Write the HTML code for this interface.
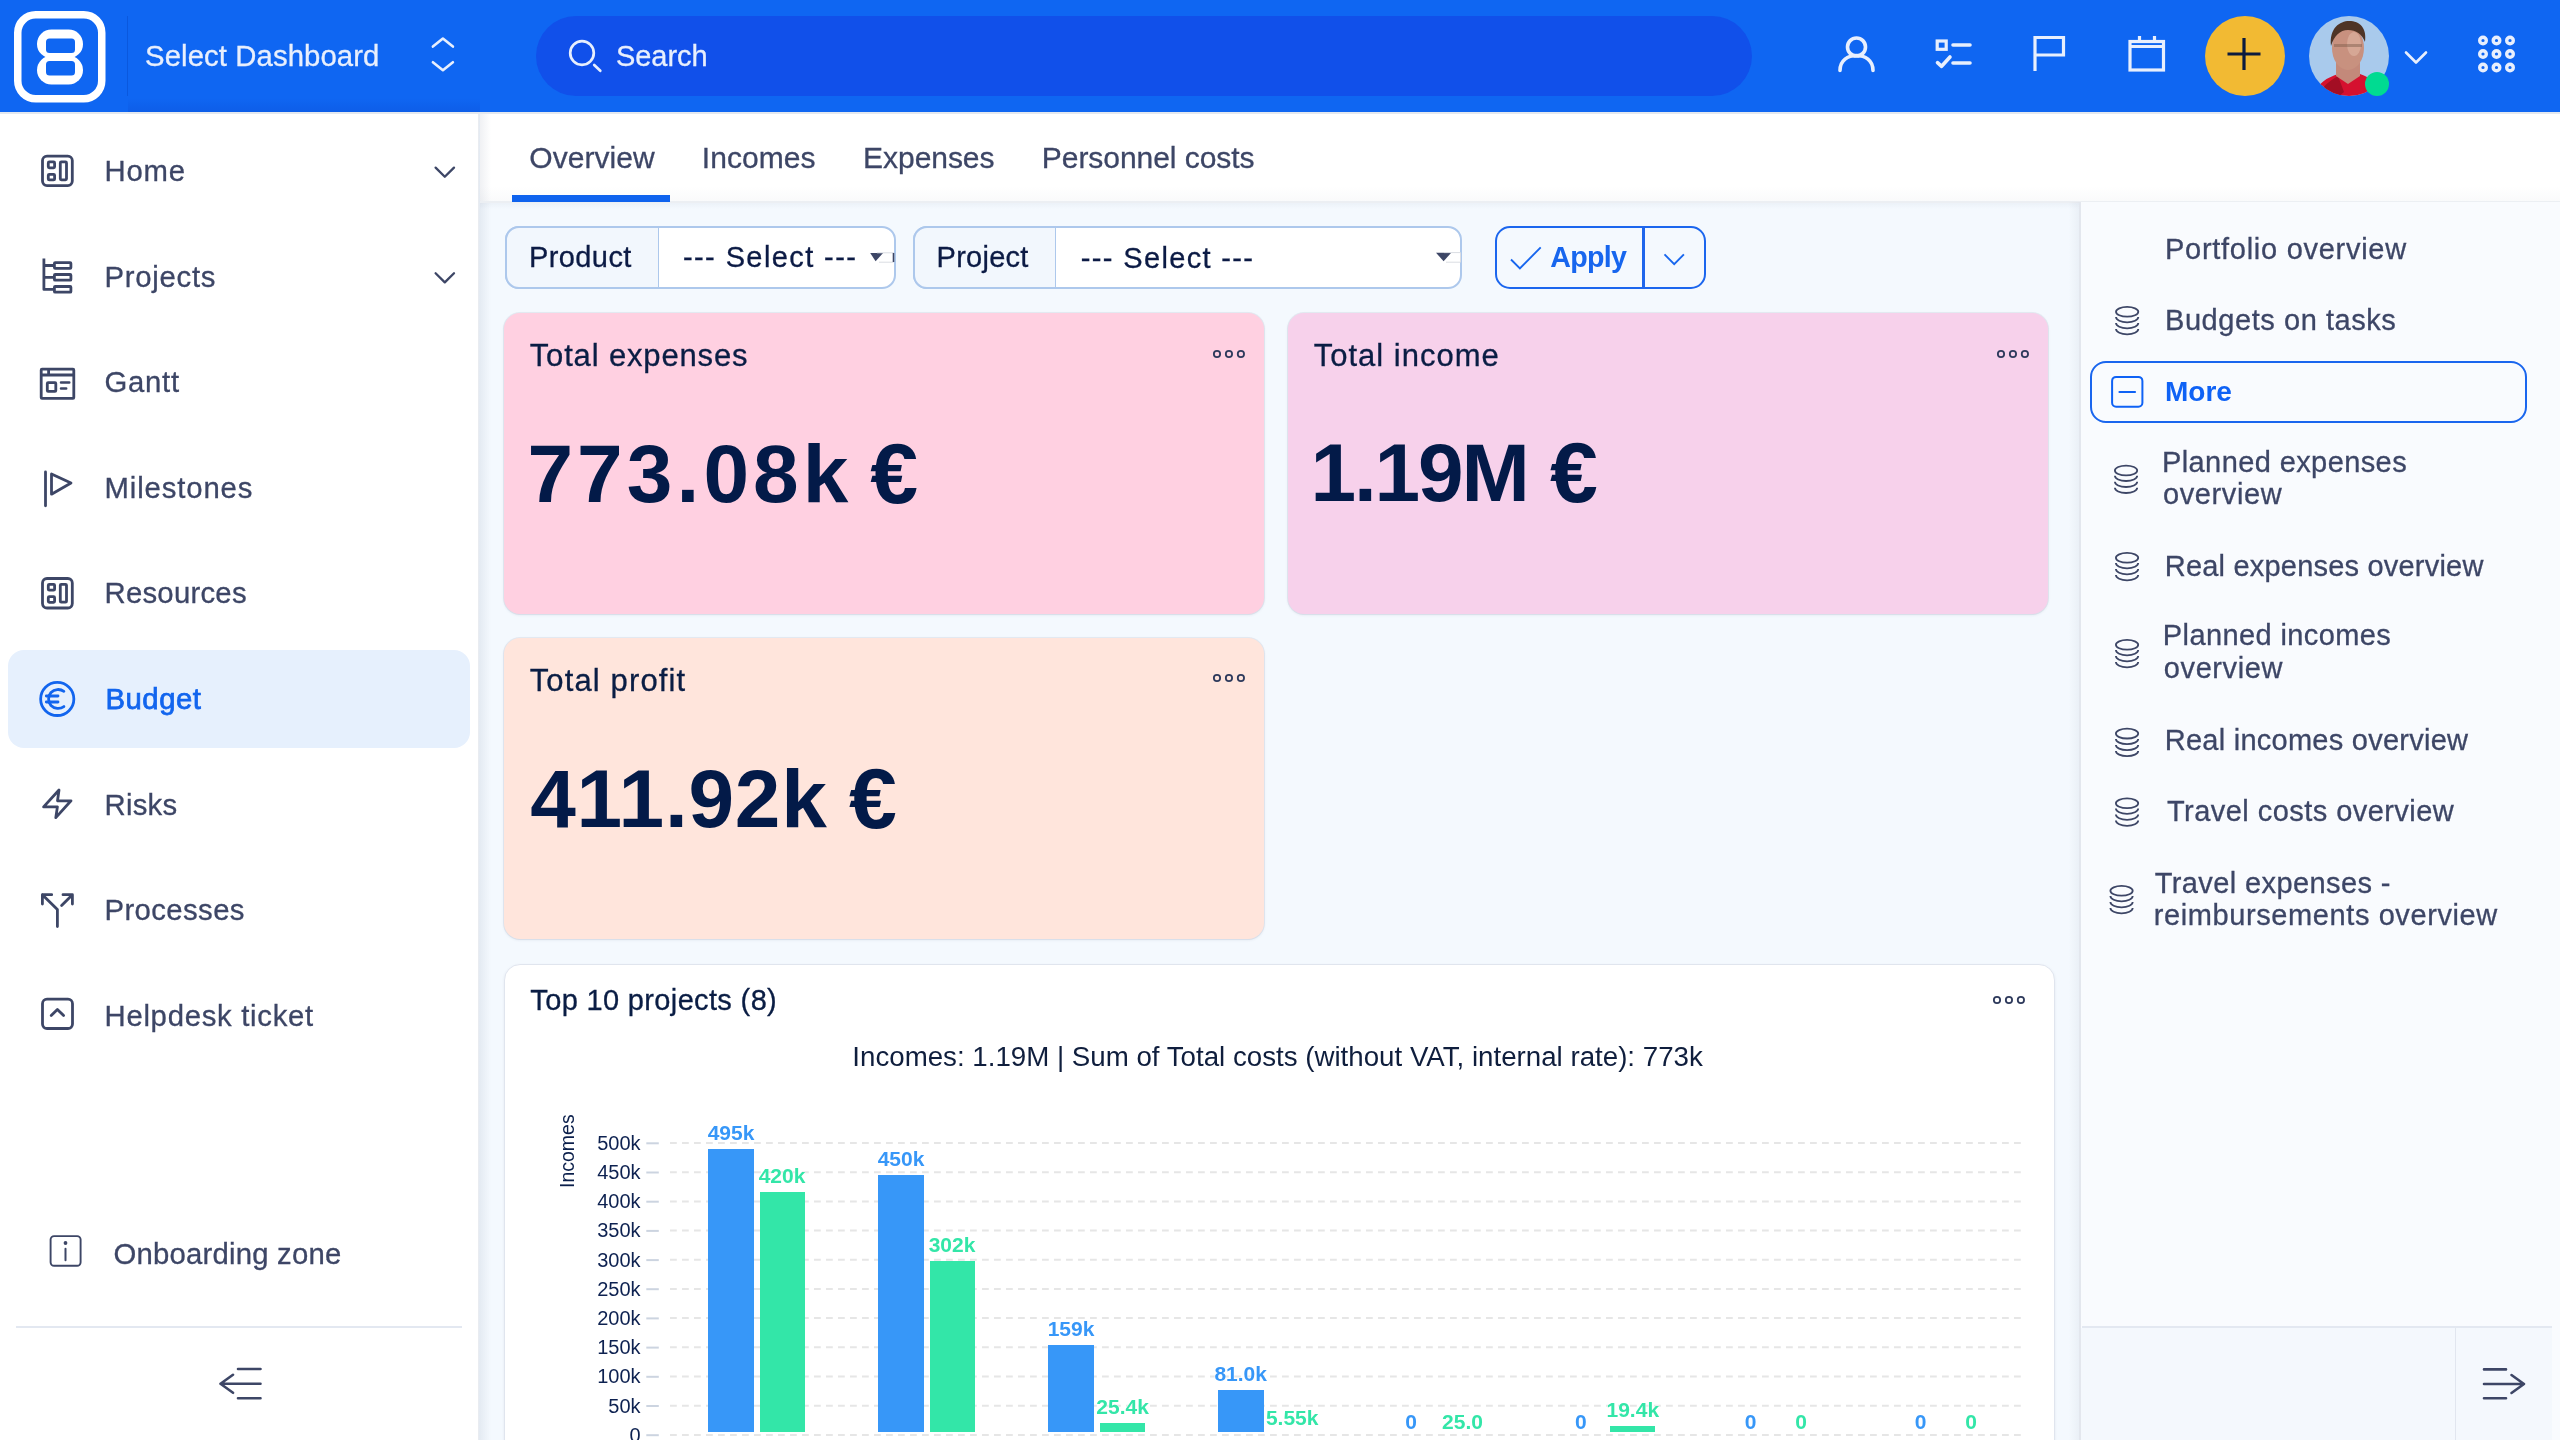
<!DOCTYPE html><html><head><meta charset="utf-8"><title>Budget</title><style>
*{margin:0;padding:0;box-sizing:border-box}
html,body{width:2560px;height:1440px;overflow:hidden;background:#F4F9FE;font-family:"Liberation Sans", sans-serif}
.a{position:absolute}
.t{position:absolute;line-height:1;white-space:nowrap}
svg{position:absolute;left:0;top:0;overflow:visible}
</style></head><body><div style="position:absolute;left:0;top:0;width:2560px;height:1440px;overflow:hidden;will-change:transform">
<div class="a" style="left:0px;top:112px;width:478px;height:1328px;background:#FFFFFF;border-radius:0px;"></div>
<div class="a" style="left:478px;top:112px;width:1px;height:1328px;background:#E9ECF1;border-radius:0px;"></div>
<div class="a" style="left:480px;top:112px;width:2080px;height:90px;background:#FFFFFF;border-radius:0px;"></div>
<div class="a" style="left:479px;top:112px;width:12px;height:1328px;background:linear-gradient(90deg,rgba(20,40,80,0.07),rgba(20,40,80,0));border-radius:0px;"></div>
<div class="a" style="left:480px;top:186px;width:2080px;height:15px;background:linear-gradient(180deg,rgba(20,40,80,0),rgba(20,40,80,0.025));border-radius:0px;"></div>
<div class="a" style="left:480px;top:201px;width:2080px;height:1.5px;background:#ECEFF3;border-radius:0px;"></div>
<div class="a" style="left:480px;top:202.5px;width:1600px;height:6px;background:linear-gradient(180deg,rgba(20,40,80,0.035),rgba(20,40,80,0));border-radius:0px;"></div>
<div class="a" style="left:2080px;top:202px;width:480px;height:1238px;background:#F9FBFE;border-radius:0px;"></div>
<div class="a" style="left:2079px;top:202px;width:2px;height:1238px;background:#E3E7EE;border-radius:0px;"></div>
<div class="a" style="left:2068px;top:202px;width:11px;height:1238px;background:linear-gradient(90deg,rgba(20,40,80,0),rgba(20,40,80,0.04));border-radius:0px;"></div>
<div class="a" style="left:2082px;top:1326px;width:470px;height:2px;background:#E3E8F1;border-radius:0px;"></div>
<div class="a" style="left:2081px;top:1328px;width:471px;height:112px;background:#F4F8FD;border-radius:0px;"></div>
<div class="a" style="left:2455px;top:1328px;width:1px;height:112px;background:#E1E6EF;border-radius:0px;"></div>
<div class="a" style="left:0px;top:0px;width:2560px;height:112px;background:#0F66F2;border-radius:0px;"></div>
<div class="a" style="left:128px;top:98px;width:352px;height:14px;background:linear-gradient(180deg,rgba(0,30,160,0),rgba(0,30,160,0.12));border-radius:0px;"></div>
<div class="a" style="left:0px;top:112px;width:2560px;height:2px;background:#E3E8EF;border-radius:0px;"></div>
<div class="a" style="left:127px;top:16px;width:1px;height:80px;background:#0A58DE;border-radius:0px;"></div>
<svg width="2560" height="112" style="left:0;top:0">
<rect x="17.75" y="14.75" width="84" height="84" rx="18" fill="none" stroke="#fff" stroke-width="7.5"/>
<rect x="37" y="29.5" width="46" height="28.8" rx="14.4" fill="#fff"/>
<rect x="37" y="55.7" width="46" height="28.8" rx="14.4" fill="#fff"/>
<rect x="46" y="38.5" width="29" height="14.5" rx="3.5" fill="#0F66F2"/>
<rect x="46" y="61" width="29" height="14.5" rx="3.5" fill="#0F66F2"/>
<path d="M432.9 46.6 L442.9 38.5 L452.9 46.6 M432.9 62.2 L442.9 70.2 L452.9 62.2" fill="none" stroke="#E8EFFD" stroke-width="2.6" stroke-linecap="round" stroke-linejoin="round"/>
<rect x="536" y="16" width="1216" height="80" rx="40" fill="#1150EA"/>
<circle cx="582" cy="53" r="11.8" fill="none" stroke="#E8EFFD" stroke-width="2.7"/>
<path d="M594.2 65 L600.3 70.8" stroke="#E8EFFD" stroke-width="2.7" stroke-linecap="round"/>
<g fill="none" stroke="#E8EFFD" stroke-width="3.6" stroke-linecap="round" stroke-linejoin="round">
<circle cx="1856.5" cy="47" r="9"/>
<path d="M1840 70.5 C1840 60 1848 55.5 1856.5 55.5 C1865 55.5 1873 60 1873 70.5"/>
<rect x="1937.2" y="41" width="9" height="8.3" stroke-width="3.2" stroke-linecap="butt" stroke-linejoin="miter"/>
<path d="M1953 45 H1970 M1953 63 H1970"/>
<path d="M1937.5 62.6 L1941.6 66.3 L1950 57"/>
<path d="M2035 71 V37.5 H2063.5 V55 H2035" stroke-width="3.2" stroke-linecap="butt" stroke-linejoin="miter"/>
<rect x="2130" y="41.5" width="33.5" height="28.5" stroke-width="3.2" stroke-linejoin="miter"/>
<path d="M2130 46.5 H2163.5 M2139.5 36 V41 M2154.5 36 V41" stroke-width="3.2" stroke-linecap="butt"/>
</g>
<circle cx="2245" cy="56" r="40" fill="#F2BA33"/>
<path d="M2244 38 V70 M2227.5 54 H2260.5" stroke="#0C1B3E" stroke-width="3.2"/>
<defs><clipPath id="av"><circle cx="2349" cy="56" r="40"/></clipPath></defs>
<g clip-path="url(#av)">
<rect x="2309" y="16" width="80" height="80" fill="#A9CAEC"/>
<path d="M2312 100 C2316 84 2326 78 2338 74 L2348 80 L2360 74 C2372 78 2380 86 2384 100 Z" fill="#D5112F"/>
<path d="M2316 100 C2320 88 2328 82 2338 76 L2344 92 L2334 100 Z" fill="#A30E24"/>
<path d="M2336 62 L2360 62 L2360 76 L2348 84 L2336 76 Z" fill="#C3897A"/>
<ellipse cx="2348" cy="48" rx="16" ry="22" fill="#C8917F"/>
<ellipse cx="2354" cy="44" rx="7" ry="12" fill="#D9AC9B" opacity="0.8"/>
<path d="M2331 46 C2329 28 2340 21 2349 21 C2360 21 2367 28 2365 42 C2362 34 2356 30 2348 30 C2340 30 2334 36 2331 46 Z" fill="#4E3426"/>
<rect x="2334" y="44" width="28" height="3" fill="#7A5A4A" opacity="0.45"/>
</g>
<circle cx="2377" cy="84" r="12" fill="#00DB91"/>
<path d="M2406 52.5 L2416 62.5 L2426 52.5" fill="none" stroke="#E8EFFD" stroke-width="2.6" stroke-linecap="round" stroke-linejoin="round"/>
<g fill="none" stroke="#E8EFFD" stroke-width="3.4">
<circle cx="2483" cy="40.5" r="3.3"/><circle cx="2496.5" cy="40.5" r="3.3"/><circle cx="2510" cy="40.5" r="3.3"/>
<circle cx="2483" cy="54" r="3.3"/><circle cx="2496.5" cy="54" r="3.3"/><circle cx="2510" cy="54" r="3.3"/>
<circle cx="2483" cy="67.5" r="3.3"/><circle cx="2496.5" cy="67.5" r="3.3"/><circle cx="2510" cy="67.5" r="3.3"/>
</g>
</svg>
<div class="t " style="left:145.00px;top:41.40px;font-size:29.3px;color:#E8EFFD;font-weight:400;letter-spacing:0.1px;-webkit-text-stroke:0.3px #E8EFFD;">Select Dashboard</div>
<div class="t " style="left:616.00px;top:41.65px;font-size:29px;color:#E8EFFD;font-weight:400;letter-spacing:-0.05px;-webkit-text-stroke:0.3px #E8EFFD;">Search</div>
<div class="a" style="left:8px;top:650px;width:462px;height:98px;background:#E6F0FD;border-radius:16px;"></div>
<div class="t " style="left:104.50px;top:156.00px;font-size:29.3px;color:#3D4666;font-weight:400;letter-spacing:0.78px;-webkit-text-stroke:0.3px #3D4666;">Home</div>
<div class="t " style="left:104.50px;top:261.60px;font-size:29.3px;color:#3D4666;font-weight:400;letter-spacing:0.74px;-webkit-text-stroke:0.3px #3D4666;">Projects</div>
<div class="t " style="left:104.50px;top:367.20px;font-size:29.3px;color:#3D4666;font-weight:400;letter-spacing:0.72px;-webkit-text-stroke:0.3px #3D4666;">Gantt</div>
<div class="t " style="left:104.50px;top:472.80px;font-size:29.3px;color:#3D4666;font-weight:400;letter-spacing:0.87px;-webkit-text-stroke:0.3px #3D4666;">Milestones</div>
<div class="t " style="left:104.50px;top:578.40px;font-size:29.3px;color:#3D4666;font-weight:400;letter-spacing:0.25px;-webkit-text-stroke:0.3px #3D4666;">Resources</div>
<div class="t " style="left:105.50px;top:684.00px;font-size:29.3px;color:#1265EE;font-weight:400;letter-spacing:0.5px;-webkit-text-stroke:0.75px #1265EE;">Budget</div>
<div class="t " style="left:104.50px;top:789.60px;font-size:29.3px;color:#3D4666;font-weight:400;letter-spacing:0.25px;-webkit-text-stroke:0.3px #3D4666;">Risks</div>
<div class="t " style="left:104.50px;top:895.20px;font-size:29.3px;color:#3D4666;font-weight:400;letter-spacing:0.4px;-webkit-text-stroke:0.3px #3D4666;">Processes</div>
<div class="t " style="left:104.50px;top:1000.80px;font-size:29.3px;color:#3D4666;font-weight:400;letter-spacing:0.72px;-webkit-text-stroke:0.3px #3D4666;">Helpdesk ticket</div>
<div class="t " style="left:113.60px;top:1239.00px;font-size:29.3px;color:#3D4666;font-weight:400;letter-spacing:0.2px;-webkit-text-stroke:0.3px #3D4666;">Onboarding zone</div>
<svg width="480" height="1440" style="left:0;top:0">
<g fill="none" stroke="#3D4666" stroke-width="2.8" stroke-linecap="round" stroke-linejoin="round">
<rect x="42.5" y="156.1" width="29.8" height="29.5" rx="4.5"/>
<rect x="48.3" y="161.9" width="6.3" height="5.9" rx="1"/>
<rect x="48.3" y="174.3" width="6.3" height="5.6" rx="1"/>
<rect x="60.3" y="161.9" width="6.2" height="17.9" rx="1"/>
<path d="M435.6 167.6 L444.8 176.8 L454 167.6" stroke-width="2.3"/>
<path d="M435.6 273.2 L444.8 282.4 L454 273.2" stroke-width="2.3"/>
<path d="M43.9 258.5 V289.4 H54.3 M43.9 265.5 H54.3 M43.9 277.4 H54.3" stroke-linecap="butt"/>
<rect x="54.4" y="262.6" width="16.5" height="5.7" rx="0.8"/>
<rect x="54.4" y="274.5" width="16.5" height="5.7" rx="0.8"/>
<rect x="54.4" y="286.5" width="16.5" height="5.7" rx="0.8"/>
<rect x="41.2" y="369.2" width="32.6" height="29.2" rx="0.8"/>
<path d="M41.2 375 H73.8 M48.6 369.2 V375" stroke-linecap="butt"/>
<rect x="47.3" y="382.6" width="8.5" height="8.8" rx="0.8"/>
<path d="M61 382.5 H69.3 M61 388.4 H66.2" stroke-width="2.5"/>
<path d="M45.5 472 V505.8"/>
<path d="M51.5 474 V494.2 L71 483 Z"/>
<rect x="42.5" y="578.5" width="29.8" height="29.5" rx="4.5"/>
<rect x="48.3" y="584.3" width="6.3" height="5.9" rx="1"/>
<rect x="48.3" y="596.7" width="6.3" height="5.6" rx="1"/>
<rect x="60.3" y="584.3" width="6.2" height="17.9" rx="1"/>
<path d="M59 790 L57.5 800.8 L71 800.8 L55.8 817.6 L57.4 806.9 L43.6 806.9 Z"/>
<path d="M42.4 904 V894.7 H51.7 M42.4 894.7 L57.4 909.6 V926.6 M63 894.7 H72.4 V904 M72.4 894.7 L61.6 905.5"/>
<rect x="42.5" y="999.2" width="30" height="29.3" rx="4.5"/>
<path d="M51.2 1015.6 L57.4 1009.4 L63.6 1015.6"/>
<rect x="50.6" y="1236.1" width="30" height="29.7" rx="3.5" stroke-width="1.9"/>
<path d="M65.5 1248.8 V1260.3" stroke-width="2"/>
<path d="M238 1369 H260.5 M220.5 1383.8 H260.5 M238 1398.2 H260.5 M233 1374.8 L220.5 1383.8 L233 1392.8" stroke-width="2.6"/>
</g>
<circle cx="65.5" cy="1243" r="1.9" fill="#3D4666"/>
<g fill="none" stroke="#1265EE" stroke-width="2.8" stroke-linecap="round">
<circle cx="57.25" cy="698.9" r="16.6"/>
<path d="M63.9 691.3 A10 10 0 0 0 51 692.5 A10 10 0 0 0 51 705.5 A10 10 0 0 0 63.9 706.6"/>
<path d="M46.3 696 H58 M46.3 702 H58"/>
</g>
</svg>
<div class="a" style="left:16px;top:1326px;width:446px;height:2px;background:#E3E8F1;border-radius:0px;"></div>
<div class="t " style="left:529.30px;top:143.20px;font-size:30px;color:#3D4666;font-weight:400;letter-spacing:0.05px;-webkit-text-stroke:0.3px #3D4666;">Overview</div>
<div class="t " style="left:701.80px;top:143.20px;font-size:30px;color:#3D4666;font-weight:400;letter-spacing:0.05px;-webkit-text-stroke:0.3px #3D4666;">Incomes</div>
<div class="t " style="left:863.10px;top:143.20px;font-size:30px;color:#3D4666;font-weight:400;letter-spacing:-0.05px;-webkit-text-stroke:0.3px #3D4666;">Expenses</div>
<div class="t " style="left:1041.80px;top:143.20px;font-size:30px;color:#3D4666;font-weight:400;letter-spacing:-0.05px;-webkit-text-stroke:0.3px #3D4666;">Personnel costs</div>
<div class="a" style="left:512px;top:195px;width:158px;height:7px;background:#0F63EE;border-radius:0px;"></div>
<div class="a" style="left:504.5px;top:225.8px;width:391px;height:63px;background:#FFFFFF;border-radius:14px;border:2px solid #ADC8EC;"></div>
<div class="a" style="left:504.5px;top:225.8px;width:154px;height:63px;background:#F2F7FD;border-radius:0px;border:2px solid #ADC8EC;border-right:1.5px solid #ADC8EC;border-radius:14px 0 0 14px;"></div>
<div class="t " style="left:529.00px;top:243.05px;font-size:29px;color:#0C1B45;font-weight:400;letter-spacing:0.4px;-webkit-text-stroke:0.3px #0C1B45;">Product</div>
<div class="t " style="left:683.00px;top:243.05px;font-size:29px;color:#0C1B45;font-weight:400;letter-spacing:1.4px;-webkit-text-stroke:0.3px #0C1B45;">--- Select ---</div>
<div class="a" style="left:912.7px;top:225.8px;width:549.3px;height:63px;background:#FFFFFF;border-radius:14px;border:2px solid #ADC8EC;"></div>
<div class="a" style="left:912.7px;top:225.8px;width:143px;height:63px;background:#F2F7FD;border-radius:0px;border:2px solid #ADC8EC;border-right:1.5px solid #ADC8EC;border-radius:14px 0 0 14px;"></div>
<div class="t " style="left:936.60px;top:243.05px;font-size:29px;color:#0C1B45;font-weight:400;letter-spacing:0.25px;-webkit-text-stroke:0.3px #0C1B45;">Project</div>
<div class="t " style="left:1080.80px;top:244.45px;font-size:29px;color:#0C1B45;font-weight:400;letter-spacing:1.35px;-webkit-text-stroke:0.3px #0C1B45;">--- Select ---</div>
<div class="a" style="left:1494.5px;top:225.6px;width:211px;height:63.6px;background:transparent;border-radius:15px;border:2px solid #1B66EE;"></div>
<div class="a" style="left:1641.5px;top:226px;width:3px;height:63px;background:#1F66EC;border-radius:0px;"></div>
<div class="t " style="left:1550.20px;top:242.89px;font-size:28.6px;color:#1766EE;font-weight:700;letter-spacing:-0.7px;">Apply</div>
<svg width="2560" height="1440" style="left:0;top:0">
<path d="M870.2 253.1 H883.1 L875.6 261.2 Z" fill="#3D4666"/>
<path d="M877 252.8 H893.8 V262.2 H879" fill="none" stroke="#DADDE3" stroke-width="1"/>
<path d="M893.5 253 V262" stroke="#3D4666" stroke-width="1.6"/>
<path d="M1436 252.8 H1451.2 L1443.6 261.2 Z" fill="#3D4666"/>
<path d="M1444 252.6 H1460.5 V262.2 H1446" fill="none" stroke="#DADDE3" stroke-width="1"/>
<path d="M1511 259.5 L1519.9 268.4 L1540.7 247.4" fill="none" stroke="#1766EE" stroke-width="1.9"/>
<path d="M1664.5 254.4 L1674.2 264.2 L1683.9 254.4" fill="none" stroke="#1766EE" stroke-width="1.9"/>
</svg>
<div class="a" style="left:504px;top:313px;width:760px;height:301px;background:#FFD0E1;border-radius:16px;box-shadow:0 0 0 1px rgba(40,60,100,0.07),0 1px 3px rgba(40,60,100,0.10);"></div>
<div class="t " style="left:529.70px;top:340.01px;font-size:31px;color:#0A1D44;font-weight:400;letter-spacing:0.85px;-webkit-text-stroke:0.3px #0A1D44;">Total expenses</div>
<div class="t " style="left:527.40px;top:433.09px;font-size:82px;color:#031A48;font-weight:700;letter-spacing:4.1px;">773.08k</div>
<div class="t " style="left:870.30px;top:429.70px;font-size:86px;color:#031A48;font-weight:700;letter-spacing:0px;">€</div>
<svg width="60" height="20" style="left:1206.8px;top:343.75px"><g fill="none" stroke="#2E3A5C" stroke-width="1.8"><circle cx="10" cy="10" r="3.15"/><circle cx="21.95" cy="10" r="3.15"/><circle cx="33.9" cy="10" r="3.15"/></g></svg>
<div class="a" style="left:1288px;top:313px;width:760px;height:301px;background:#F7D1EB;border-radius:16px;box-shadow:0 0 0 1px rgba(40,60,100,0.07),0 1px 3px rgba(40,60,100,0.10);"></div>
<div class="t " style="left:1313.70px;top:340.06px;font-size:31px;color:#0A1D44;font-weight:400;letter-spacing:1.0px;-webkit-text-stroke:0.3px #0A1D44;">Total income</div>
<div class="t " style="left:1310.40px;top:432.39px;font-size:82px;color:#031A48;font-weight:700;letter-spacing:-2.1px;">1.19M</div>
<div class="t " style="left:1550.00px;top:429.00px;font-size:86px;color:#031A48;font-weight:700;letter-spacing:0px;">€</div>
<svg width="60" height="20" style="left:1990.8px;top:343.8px"><g fill="none" stroke="#2E3A5C" stroke-width="1.8"><circle cx="10" cy="10" r="3.15"/><circle cx="21.95" cy="10" r="3.15"/><circle cx="33.9" cy="10" r="3.15"/></g></svg>
<div class="a" style="left:504px;top:638px;width:760px;height:301px;background:#FFE5DC;border-radius:16px;box-shadow:0 0 0 1px rgba(40,60,100,0.07),0 1px 3px rgba(40,60,100,0.10);"></div>
<div class="t " style="left:529.70px;top:665.01px;font-size:31px;color:#0A1D44;font-weight:400;letter-spacing:1.13px;-webkit-text-stroke:0.3px #0A1D44;">Total profit</div>
<div class="t " style="left:530.20px;top:758.39px;font-size:82px;color:#031A48;font-weight:700;letter-spacing:0.8px;">411.92k</div>
<div class="t " style="left:849.10px;top:755.00px;font-size:86px;color:#031A48;font-weight:700;letter-spacing:0px;">€</div>
<svg width="60" height="20" style="left:1206.8px;top:668px"><g fill="none" stroke="#2E3A5C" stroke-width="1.8"><circle cx="10" cy="10" r="3.15"/><circle cx="21.95" cy="10" r="3.15"/><circle cx="33.9" cy="10" r="3.15"/></g></svg>
<div class="a" style="left:504px;top:963.6px;width:1551px;height:520px;background:#FFFFFF;border-radius:16px;border:1px solid #E0E5EE;box-shadow:0 1px 3px rgba(40,60,100,0.08);"></div>
<div class="t " style="left:530.30px;top:986.45px;font-size:29px;color:#0A1D44;font-weight:400;letter-spacing:0.35px;-webkit-text-stroke:0.3px #0A1D44;">Top 10 projects (8)</div>
<svg width="60" height="20" style="left:1987px;top:990px"><g fill="none" stroke="#2E3A5C" stroke-width="1.8"><circle cx="10" cy="10" r="3.15"/><circle cx="21.95" cy="10" r="3.15"/><circle cx="33.9" cy="10" r="3.15"/></g></svg>
<div class="t " style="left:852.30px;top:1042.95px;font-size:27.7px;color:#0F1E3D;font-weight:400;letter-spacing:0px;">Incomes: 1.19M | Sum of Total costs (without VAT, internal rate): 773k</div>
<div class="t" style="left:574px;top:1187.8px;font-size:19.5px;color:#0B1F4B;transform-origin:0 0;transform:rotate(-90deg);line-height:1;margin-top:0"><span style="position:relative;top:-16.5px">Incomes</span></div>
<svg width="2560" height="1440" style="left:0;top:0">
<path d="M670 1434.9 H2021" stroke="#E6E6E6" stroke-width="2" stroke-dasharray="6.8 5.2"/>
<path d="M646.3 1435.2 H658.8" stroke="#CCD4E0" stroke-width="2"/>
<path d="M670 1405.7 H2021" stroke="#E6E6E6" stroke-width="2" stroke-dasharray="6.8 5.2"/>
<path d="M646.3 1406.0 H658.8" stroke="#CCD4E0" stroke-width="2"/>
<path d="M670 1376.5 H2021" stroke="#E6E6E6" stroke-width="2" stroke-dasharray="6.8 5.2"/>
<path d="M646.3 1376.8 H658.8" stroke="#CCD4E0" stroke-width="2"/>
<path d="M670 1347.3 H2021" stroke="#E6E6E6" stroke-width="2" stroke-dasharray="6.8 5.2"/>
<path d="M646.3 1347.6 H658.8" stroke="#CCD4E0" stroke-width="2"/>
<path d="M670 1318.1 H2021" stroke="#E6E6E6" stroke-width="2" stroke-dasharray="6.8 5.2"/>
<path d="M646.3 1318.4 H658.8" stroke="#CCD4E0" stroke-width="2"/>
<path d="M670 1289.0 H2021" stroke="#E6E6E6" stroke-width="2" stroke-dasharray="6.8 5.2"/>
<path d="M646.3 1289.2 H658.8" stroke="#CCD4E0" stroke-width="2"/>
<path d="M670 1259.8 H2021" stroke="#E6E6E6" stroke-width="2" stroke-dasharray="6.8 5.2"/>
<path d="M646.3 1260.1 H658.8" stroke="#CCD4E0" stroke-width="2"/>
<path d="M670 1230.6 H2021" stroke="#E6E6E6" stroke-width="2" stroke-dasharray="6.8 5.2"/>
<path d="M646.3 1230.9 H658.8" stroke="#CCD4E0" stroke-width="2"/>
<path d="M670 1201.4 H2021" stroke="#E6E6E6" stroke-width="2" stroke-dasharray="6.8 5.2"/>
<path d="M646.3 1201.7 H658.8" stroke="#CCD4E0" stroke-width="2"/>
<path d="M670 1172.2 H2021" stroke="#E6E6E6" stroke-width="2" stroke-dasharray="6.8 5.2"/>
<path d="M646.3 1172.5 H658.8" stroke="#CCD4E0" stroke-width="2"/>
<path d="M670 1143.0 H2021" stroke="#E6E6E6" stroke-width="2" stroke-dasharray="6.8 5.2"/>
<path d="M646.3 1143.3 H658.8" stroke="#CCD4E0" stroke-width="2"/>
</svg>
<div class="t" style="left:440.6px;width:200px;text-align:right;top:1424.77px;font-size:20px;color:#0D2150">0</div>
<div class="t" style="left:440.6px;width:200px;text-align:right;top:1395.58px;font-size:20px;color:#0D2150">50k</div>
<div class="t" style="left:440.6px;width:200px;text-align:right;top:1366.39px;font-size:20px;color:#0D2150">100k</div>
<div class="t" style="left:440.6px;width:200px;text-align:right;top:1337.20px;font-size:20px;color:#0D2150">150k</div>
<div class="t" style="left:440.6px;width:200px;text-align:right;top:1308.01px;font-size:20px;color:#0D2150">200k</div>
<div class="t" style="left:440.6px;width:200px;text-align:right;top:1278.82px;font-size:20px;color:#0D2150">250k</div>
<div class="t" style="left:440.6px;width:200px;text-align:right;top:1249.63px;font-size:20px;color:#0D2150">300k</div>
<div class="t" style="left:440.6px;width:200px;text-align:right;top:1220.44px;font-size:20px;color:#0D2150">350k</div>
<div class="t" style="left:440.6px;width:200px;text-align:right;top:1191.25px;font-size:20px;color:#0D2150">400k</div>
<div class="t" style="left:440.6px;width:200px;text-align:right;top:1162.06px;font-size:20px;color:#0D2150">450k</div>
<div class="t" style="left:440.6px;width:200px;text-align:right;top:1132.87px;font-size:20px;color:#0D2150">500k</div>
<div class="a" style="left:708px;top:1149px;width:46px;height:283px;background:#3797F8;border-radius:0px;"></div>
<div class="a" style="left:760px;top:1192.3px;width:45px;height:239.70000000000005px;background:#33E6A8;border-radius:0px;"></div>
<div class="a" style="left:878px;top:1174.9px;width:46px;height:257.0999999999999px;background:#3797F8;border-radius:0px;"></div>
<div class="a" style="left:930px;top:1260.6px;width:45px;height:171.4000000000001px;background:#33E6A8;border-radius:0px;"></div>
<div class="a" style="left:1048px;top:1345px;width:46px;height:87px;background:#3797F8;border-radius:0px;"></div>
<div class="a" style="left:1100px;top:1423.1px;width:45px;height:8.900000000000091px;background:#33E6A8;border-radius:0px;"></div>
<div class="a" style="left:1218px;top:1390.1px;width:46px;height:41.90000000000009px;background:#3797F8;border-radius:0px;"></div>
<div class="a" style="left:1610px;top:1426.3px;width:45px;height:5.7000000000000455px;background:#33E6A8;border-radius:0px;"></div>
<div class="t" style="left:631px;width:200px;text-align:center;top:1121.72px;font-size:21px;font-weight:700;color:#3797F8;text-shadow:0 0 2px #fff,0 0 2px #fff">495k</div>
<div class="t" style="left:682px;width:200px;text-align:center;top:1165.22px;font-size:21px;font-weight:700;color:#33E6A8;text-shadow:0 0 2px #fff,0 0 2px #fff">420k</div>
<div class="t" style="left:801px;width:200px;text-align:center;top:1147.72px;font-size:21px;font-weight:700;color:#3797F8;text-shadow:0 0 2px #fff,0 0 2px #fff">450k</div>
<div class="t" style="left:852px;width:200px;text-align:center;top:1233.72px;font-size:21px;font-weight:700;color:#33E6A8;text-shadow:0 0 2px #fff,0 0 2px #fff">302k</div>
<div class="t" style="left:971px;width:200px;text-align:center;top:1318.02px;font-size:21px;font-weight:700;color:#3797F8;text-shadow:0 0 2px #fff,0 0 2px #fff">159k</div>
<div class="t" style="left:1022.5999999999999px;width:200px;text-align:center;top:1395.97px;font-size:21px;font-weight:700;color:#33E6A8;text-shadow:0 0 2px #fff,0 0 2px #fff">25.4k</div>
<div class="t" style="left:1140.7px;width:200px;text-align:center;top:1362.92px;font-size:21px;font-weight:700;color:#3797F8;text-shadow:0 0 2px #fff,0 0 2px #fff">81.0k</div>
<div class="t" style="left:1192.2px;width:200px;text-align:center;top:1406.52px;font-size:21px;font-weight:700;color:#33E6A8;text-shadow:0 0 2px #fff,0 0 2px #fff">5.55k</div>
<div class="t" style="left:1311px;width:200px;text-align:center;top:1410.97px;font-size:21px;font-weight:700;color:#3797F8;text-shadow:0 0 2px #fff,0 0 2px #fff">0</div>
<div class="t" style="left:1362.5px;width:200px;text-align:center;top:1410.97px;font-size:21px;font-weight:700;color:#33E6A8;text-shadow:0 0 2px #fff,0 0 2px #fff">25.0</div>
<div class="t" style="left:1480.8px;width:200px;text-align:center;top:1410.97px;font-size:21px;font-weight:700;color:#3797F8;text-shadow:0 0 2px #fff,0 0 2px #fff">0</div>
<div class="t" style="left:1532.8px;width:200px;text-align:center;top:1399.12px;font-size:21px;font-weight:700;color:#33E6A8;text-shadow:0 0 2px #fff,0 0 2px #fff">19.4k</div>
<div class="t" style="left:1650.5px;width:200px;text-align:center;top:1410.97px;font-size:21px;font-weight:700;color:#3797F8;text-shadow:0 0 2px #fff,0 0 2px #fff">0</div>
<div class="t" style="left:1701px;width:200px;text-align:center;top:1410.97px;font-size:21px;font-weight:700;color:#33E6A8;text-shadow:0 0 2px #fff,0 0 2px #fff">0</div>
<div class="t" style="left:1820.5px;width:200px;text-align:center;top:1410.97px;font-size:21px;font-weight:700;color:#3797F8;text-shadow:0 0 2px #fff,0 0 2px #fff">0</div>
<div class="t" style="left:1871px;width:200px;text-align:center;top:1410.97px;font-size:21px;font-weight:700;color:#33E6A8;text-shadow:0 0 2px #fff,0 0 2px #fff">0</div>
<div class="a" style="left:2090.4px;top:360.9px;width:437px;height:62px;background:transparent;border-radius:16px;border:2px solid #1A66EE;"></div>
<svg width="2560" height="1440" style="left:0;top:0">
<g fill="none" stroke="#3D4666" stroke-width="1.8"><ellipse cx="2127.15" cy="311.8" rx="11.15" ry="4.9"/><path d="M2116.0 317.1 A11.15 5.2 0 0 0 2138.3 317.1"/><path d="M2116.0 323.1 A11.15 5.2 0 0 0 2138.3 323.1"/><path d="M2116.0 329.1 A11.15 5.2 0 0 0 2138.3 329.1"/></g>
<g fill="none" stroke="#3D4666" stroke-width="1.8"><ellipse cx="2126.05" cy="470.5" rx="11.15" ry="4.9"/><path d="M2114.9 475.8 A11.15 5.2 0 0 0 2137.2000000000003 475.8"/><path d="M2114.9 481.8 A11.15 5.2 0 0 0 2137.2000000000003 481.8"/><path d="M2114.9 487.8 A11.15 5.2 0 0 0 2137.2000000000003 487.8"/></g>
<g fill="none" stroke="#3D4666" stroke-width="1.8"><ellipse cx="2127.05" cy="557.8" rx="11.15" ry="4.9"/><path d="M2115.9 563.0999999999999 A11.15 5.2 0 0 0 2138.2000000000003 563.0999999999999"/><path d="M2115.9 569.0999999999999 A11.15 5.2 0 0 0 2138.2000000000003 569.0999999999999"/><path d="M2115.9 575.0999999999999 A11.15 5.2 0 0 0 2138.2000000000003 575.0999999999999"/></g>
<g fill="none" stroke="#3D4666" stroke-width="1.8"><ellipse cx="2127.05" cy="644.8" rx="11.15" ry="4.9"/><path d="M2115.9 650.0999999999999 A11.15 5.2 0 0 0 2138.2000000000003 650.0999999999999"/><path d="M2115.9 656.0999999999999 A11.15 5.2 0 0 0 2138.2000000000003 656.0999999999999"/><path d="M2115.9 662.0999999999999 A11.15 5.2 0 0 0 2138.2000000000003 662.0999999999999"/></g>
<g fill="none" stroke="#3D4666" stroke-width="1.8"><ellipse cx="2127.05" cy="733.5999999999999" rx="11.15" ry="4.9"/><path d="M2115.9 738.8999999999999 A11.15 5.2 0 0 0 2138.2000000000003 738.8999999999999"/><path d="M2115.9 744.8999999999999 A11.15 5.2 0 0 0 2138.2000000000003 744.8999999999999"/><path d="M2115.9 750.8999999999999 A11.15 5.2 0 0 0 2138.2000000000003 750.8999999999999"/></g>
<g fill="none" stroke="#3D4666" stroke-width="1.8"><ellipse cx="2127.05" cy="803.3" rx="11.15" ry="4.9"/><path d="M2115.9 808.5999999999999 A11.15 5.2 0 0 0 2138.2000000000003 808.5999999999999"/><path d="M2115.9 814.5999999999999 A11.15 5.2 0 0 0 2138.2000000000003 814.5999999999999"/><path d="M2115.9 820.5999999999999 A11.15 5.2 0 0 0 2138.2000000000003 820.5999999999999"/></g>
<g fill="none" stroke="#3D4666" stroke-width="1.8"><ellipse cx="2121.55" cy="890.8" rx="11.15" ry="4.9"/><path d="M2110.4 896.0999999999999 A11.15 5.2 0 0 0 2132.7000000000003 896.0999999999999"/><path d="M2110.4 902.0999999999999 A11.15 5.2 0 0 0 2132.7000000000003 902.0999999999999"/><path d="M2110.4 908.0999999999999 A11.15 5.2 0 0 0 2132.7000000000003 908.0999999999999"/></g>
<rect x="2112.1" y="376.9" width="30.3" height="29.9" rx="4" fill="none" stroke="#0F62F5" stroke-width="2"/>
<path d="M2119.5 392 H2135" stroke="#0F62F5" stroke-width="2.2" stroke-linecap="round"/>
<path d="M2484 1369.4 H2506 M2484 1384 H2524 M2484 1398.2 H2506 M2511.5 1375 L2524 1384 L2511.5 1393" fill="none" stroke="#3D4666" stroke-width="2.6" stroke-linecap="round" stroke-linejoin="round"/>
</svg>
<div class="t " style="left:2165.00px;top:235.45px;font-size:29px;color:#3D4666;font-weight:400;letter-spacing:0.72px;-webkit-text-stroke:0.3px #3D4666;">Portfolio overview</div>
<div class="t " style="left:2165.00px;top:305.95px;font-size:29px;color:#3D4666;font-weight:400;letter-spacing:0.56px;-webkit-text-stroke:0.3px #3D4666;">Budgets on tasks</div>
<div class="t " style="left:2162.00px;top:448.15px;font-size:29px;color:#3D4666;font-weight:400;letter-spacing:0.4px;-webkit-text-stroke:0.3px #3D4666;">Planned expenses</div>
<div class="t " style="left:2163.00px;top:479.75px;font-size:29px;color:#3D4666;font-weight:400;letter-spacing:0.6px;-webkit-text-stroke:0.3px #3D4666;">overview</div>
<div class="t " style="left:2164.80px;top:552.05px;font-size:29px;color:#3D4666;font-weight:400;letter-spacing:0.2px;-webkit-text-stroke:0.3px #3D4666;">Real expenses overview</div>
<div class="t " style="left:2162.80px;top:621.45px;font-size:29px;color:#3D4666;font-weight:400;letter-spacing:0.4px;-webkit-text-stroke:0.3px #3D4666;">Planned incomes</div>
<div class="t " style="left:2163.80px;top:653.55px;font-size:29px;color:#3D4666;font-weight:400;letter-spacing:0.6px;-webkit-text-stroke:0.3px #3D4666;">overview</div>
<div class="t " style="left:2164.80px;top:725.95px;font-size:29px;color:#3D4666;font-weight:400;letter-spacing:0.25px;-webkit-text-stroke:0.3px #3D4666;">Real incomes overview</div>
<div class="t " style="left:2167.00px;top:796.55px;font-size:29px;color:#3D4666;font-weight:400;letter-spacing:0.45px;-webkit-text-stroke:0.3px #3D4666;">Travel costs overview</div>
<div class="t " style="left:2154.70px;top:869.05px;font-size:29px;color:#3D4666;font-weight:400;letter-spacing:0.4px;-webkit-text-stroke:0.3px #3D4666;">Travel expenses -</div>
<div class="t " style="left:2153.70px;top:901.15px;font-size:29px;color:#3D4666;font-weight:400;letter-spacing:0.6px;-webkit-text-stroke:0.3px #3D4666;">reimbursements overview</div>
<div class="t " style="left:2165.10px;top:378.20px;font-size:28px;color:#0F62F5;font-weight:700;letter-spacing:-0.05px;">More</div>
</div></body></html>
